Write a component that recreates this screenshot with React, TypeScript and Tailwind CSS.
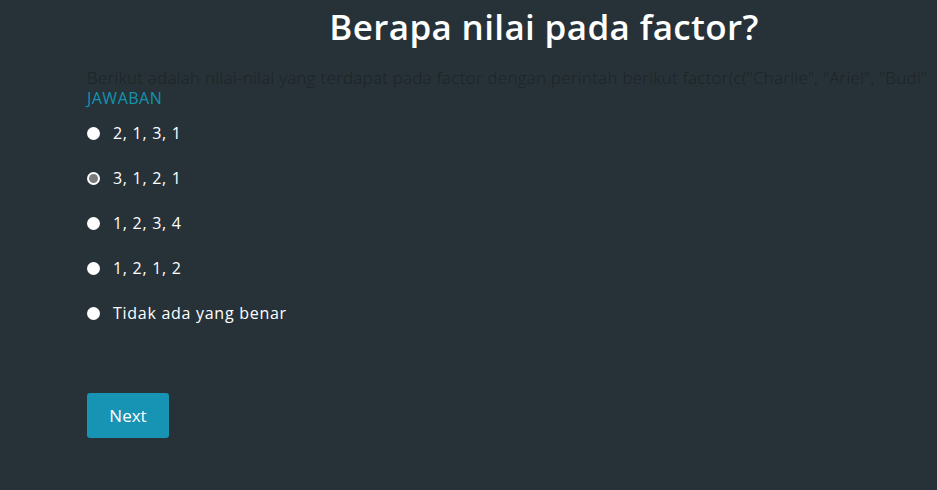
export default function App() {
  const options = ['2, 1, 3, 1', '3, 1, 2, 1', '1, 2, 3, 4', '1, 2, 1, 2', 'Tidak ada yang benar'];
  return (
    <div className="h-[490px] w-[937px] overflow-hidden bg-[#263238] font-['Open_Sans',sans-serif]">
      <div className="ml-[87px] w-[914px] pt-[6px]">
        <h1 className="text-center text-[35px] font-semibold leading-[42px] tracking-[0.01em] text-white">Berapa nilai pada factor?</h1>
        <p className="mt-[19px] whitespace-nowrap text-[17px] font-light leading-[22px] tracking-[0.015em] text-[#1e2226]">
          Berikut adalah nilai-nilai yang terdapat pada factor dengan perintah berikut factor(c("Charlie", "Ariel", "Budi"
        </p>
        <div className="text-[16px] leading-[18px] tracking-[0.03em] text-[#1592b0]">JAWABAN</div>
        <div className="mt-[17px] flex flex-col gap-[27px]">
          {options.map((o, i) => (
            <label key={o} className="flex h-[18px] items-center">
              {i === 1 ? (
                <span className="flex h-[13px] w-[13px] items-center justify-center rounded-full bg-white">
                  <span className="h-[9px] w-[9px] rounded-full bg-[#7b7b7b]" />
                </span>
              ) : (
                <span className="h-[13px] w-[13px] rounded-full bg-white" />
              )}
              <span className="ml-[13px] text-[16px] tracking-[0.045em] text-white">{o}</span>
            </label>
          ))}
        </div>
        <button className="mt-[71px] h-[45px] w-[82px] rounded-[3px] bg-[#1793b3] text-[17px] text-white">Next</button>
      </div>
    </div>
  );
}
